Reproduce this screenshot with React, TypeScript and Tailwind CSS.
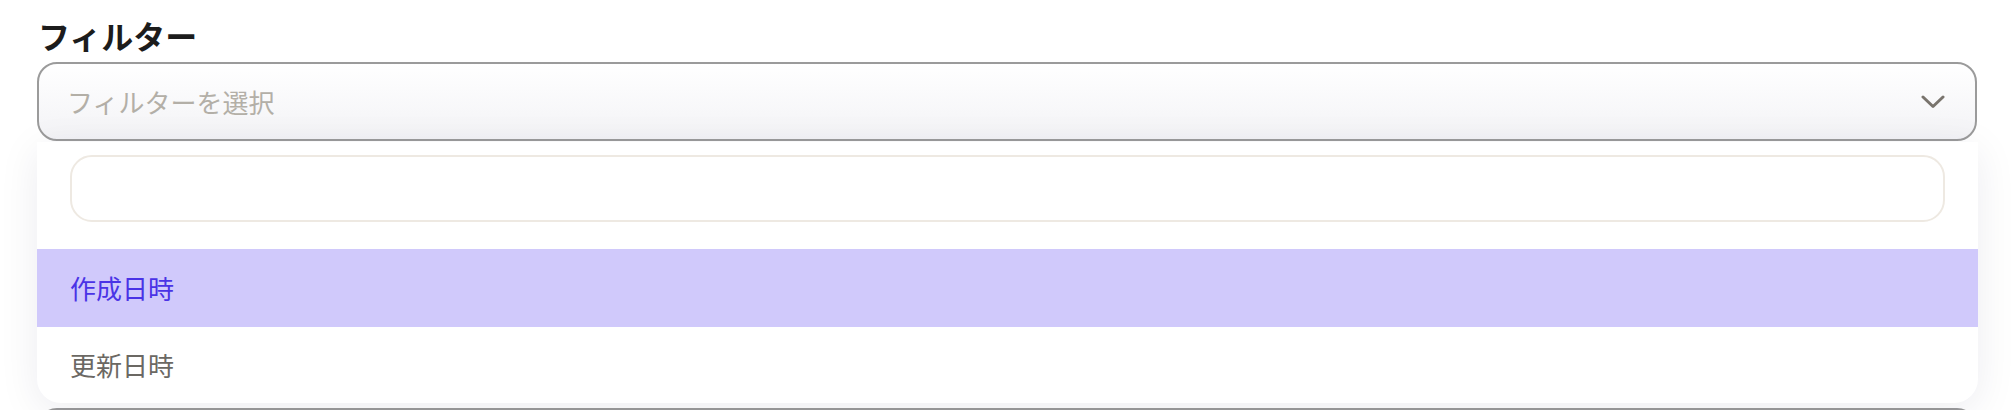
import React from "react";

export default function App() {
  return (
    <div className="w-full h-[410px] overflow-hidden bg-white pl-[37px] pr-[35px] pt-[15px] font-['Noto_Sans_CJK_JP','Noto_Sans',sans-serif]">
      <div className="text-[32px] font-bold leading-[40px] text-[#1c1c1c] pl-[1px]">フィルター</div>
      <div className="relative mt-[7px]">
        <div className="h-[79px] rounded-[20px] border-2 border-[#9b9b9b] bg-gradient-to-b from-white to-[#f3f3f6] flex items-center justify-between pl-[28px] pr-[30px]">
          <span className="text-[26px] leading-none text-[#b3afa7]">フィルターを選択</span>
          <svg width="24" height="14" viewBox="0 0 24 14" fill="none">
            <path d="M2 2 L12 11.5 L22 2" stroke="#79746d" strokeWidth="3" strokeLinecap="round" strokeLinejoin="round" />
          </svg>
        </div>
        <div className="absolute left-0 right-[-1px] top-[80px] z-10 bg-white rounded-b-[24px] shadow-[0_8px_40px_rgba(30,30,60,0.08)] overflow-hidden">
          <div className="px-[33px] pt-[13px] pb-[27px]">
            <div className="h-[67px] rounded-[22px] border-2 border-[#eee9e2] bg-white"></div>
          </div>
          <div className="h-[78px] bg-[#d0c9fb] flex items-center px-[33px]">
            <span className="text-[26px] leading-none text-[#4a33e6]">作成日時</span>
          </div>
          <div className="h-[76px] flex items-center px-[33px]">
            <span className="text-[26px] leading-none text-[#6b6863]">更新日時</span>
          </div>
        </div>
      </div>
      <div className="mt-[267px] h-[60px] rounded-[20px] border-2 border-[#9b9b9b]"></div>
    </div>
  );
}
